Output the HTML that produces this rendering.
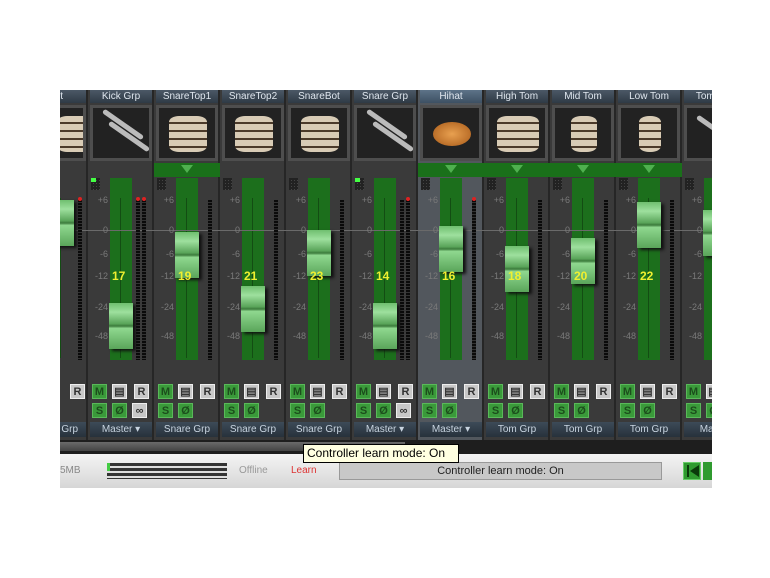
<!DOCTYPE html>
<html><head><meta charset="utf-8"><style>
*{margin:0;padding:0;box-sizing:border-box}
body{width:770px;height:578px;background:#fff;position:relative;overflow:hidden;font-family:"Liberation Sans",sans-serif}
#mix{position:absolute;left:60px;top:90px;width:652px;height:350px;background:#2e2e2e;overflow:hidden}
.s{position:absolute;top:0;width:66px;height:350px;background:#3a3a3a;border-right:2px solid #262626}
.s.sel{background:#52575d}
.nm{position:absolute;left:2px;top:0;width:62px;height:13px;background:linear-gradient(#4b5866,#2f3a45);color:#dfe6ee;font-size:10px;line-height:13px;text-align:center;white-space:nowrap;overflow:hidden}
.im{position:absolute;left:2px;top:15px;width:62px;height:56px;background:#222;border:3px solid #4e4e4e;overflow:hidden}
.gb{position:absolute;left:0;top:73px;width:66px;height:14px;background:#1a701a}
.gb:after{content:"";position:absolute;left:27px;top:2px;border-left:6px solid transparent;border-right:6px solid transparent;border-top:8px solid #4fb04f}
.gr{position:absolute;left:3px;top:88px;width:9px;height:12px;background:repeating-linear-gradient(90deg,#222 0 2px,transparent 2px 3px),repeating-linear-gradient(#222 0 2px,#444 2px 3px)}
.led{position:absolute;left:3px;top:88px;width:5px;height:4px;background:#4f4}
.tr{position:absolute;left:22px;top:88px;width:22px;height:182px;background:#1c6f1c}
.tr:after{content:"";position:absolute;left:10px;top:20px;width:1px;height:160px;background:#134d13}
.zl{position:absolute;left:0;top:140px;width:66px;height:1px;background:#6a6a6a}
.sc{position:absolute;left:0;width:20px;text-align:right;color:#7a7a7a;font-size:9px}
.mt{position:absolute;top:110px;width:4px;height:160px;background:repeating-linear-gradient(#0a0a0a 0 2px,#333 2px 3px)}
.rd{position:absolute;top:107px;width:4px;height:4px;background:#d22;border-radius:2px}
.fd{position:absolute;left:21px;width:24px;height:46px;background:linear-gradient(#6fbf6f,#9ee09e 20%,#5aa55a 45%,#3c7a3c 50%,#8fd88f 55%,#5aa55a 100%);box-shadow:3px 2px 3px #111}
.n{position:absolute;left:24px;top:179px;color:#f0f030;font-size:12px;font-weight:bold;z-index:5}
.b{position:absolute;width:15px;height:15px;font-size:11px;font-weight:bold;text-align:center;line-height:15px}
.g{background:#3a9a3a;color:#1c4d1c;border:1px solid #5ab85a}
.w{background:#c8c8c8;color:#333;border:1px solid #eee}
.o{position:absolute;left:2px;top:332px;width:62px;height:15px;background:linear-gradient(#3d4b58,#27313b);color:#c8d4e0;font-size:10px;line-height:15px;text-align:center;white-space:nowrap}
.drum{position:absolute;left:10px;top:8px;width:38px;height:36px;border-radius:10px/6px;background:repeating-linear-gradient(#d8cbb5 0 6px,#4b3a2a 6px 8px)}
.cab{position:absolute;width:48px;height:5px;background:#bbb;transform:rotate(35deg);border-radius:3px}
</style></head><body>
<div id="mix">
<div class="s" style="left:-38px"><div class="nm">Out</div><div class="im"><div class="drum" style="left:30px"></div></div><div class="tr" style="left:28px;width:10px"></div><div class="zl"></div><div class="mt" style="left:56px"></div><div class="rd" style="left:56px"></div><div class="fd" style="left:28px;top:110px"></div>
<div class="b w" style="left:48px;top:294px">R</div><div class="o">Snare Grp</div></div>

<div class="s" style="left:28px"><div class="nm">Kick Grp</div><div class="im"><div class="cab" style="left:6px;top:14px"></div><div class="cab" style="left:12px;top:26px"></div></div><div class="gr"></div><div class="led"></div><div class="tr"></div><div class="zl"></div>
<div class="sc" style="top:105px">+6</div><div class="sc" style="top:135px">0</div><div class="sc" style="top:159px">-6</div><div class="sc" style="top:181px">-12</div><div class="sc" style="top:212px">-24</div><div class="sc" style="top:241px">-48</div>
<div class="mt" style="left:48px"></div><div class="mt" style="left:54px"></div><div class="rd" style="left:48px"></div><div class="rd" style="left:54px"></div><div class="n">17</div><div class="fd" style="top:213px"></div>
<div class="b g" style="left:4px;top:294px">M</div><div class="b w" style="left:24px;top:294px">▤</div><div class="b w" style="left:46px;top:294px">R</div><div class="b g" style="left:4px;top:313px">S</div><div class="b g" style="left:24px;top:313px">Ø</div><div class="b w" style="left:44px;top:313px">∞</div><div class="o">Master ▾</div></div>

<div class="s" style="left:94px"><div class="nm">SnareTop1</div><div class="im"><div class="drum"></div></div><div class="gb"></div><div class="gr"></div><div class="tr"></div><div class="zl"></div>
<div class="sc" style="top:105px">+6</div><div class="sc" style="top:135px">0</div><div class="sc" style="top:159px">-6</div><div class="sc" style="top:181px">-12</div><div class="sc" style="top:212px">-24</div><div class="sc" style="top:241px">-48</div>
<div class="mt" style="left:54px"></div><div class="n">19</div><div class="fd" style="top:142px"></div>
<div class="b g" style="left:4px;top:294px">M</div><div class="b w" style="left:24px;top:294px">▤</div><div class="b w" style="left:46px;top:294px">R</div><div class="b g" style="left:4px;top:313px">S</div><div class="b g" style="left:24px;top:313px">Ø</div><div class="o">Snare Grp</div></div>

<div class="s" style="left:160px"><div class="nm">SnareTop2</div><div class="im"><div class="drum"></div></div><div class="gr"></div><div class="tr"></div><div class="zl"></div>
<div class="sc" style="top:105px">+6</div><div class="sc" style="top:135px">0</div><div class="sc" style="top:159px">-6</div><div class="sc" style="top:181px">-12</div><div class="sc" style="top:212px">-24</div><div class="sc" style="top:241px">-48</div>
<div class="mt" style="left:54px"></div><div class="n">21</div><div class="fd" style="top:196px"></div>
<div class="b g" style="left:4px;top:294px">M</div><div class="b w" style="left:24px;top:294px">▤</div><div class="b w" style="left:46px;top:294px">R</div><div class="b g" style="left:4px;top:313px">S</div><div class="b g" style="left:24px;top:313px">Ø</div><div class="o">Snare Grp</div></div>

<div class="s" style="left:226px"><div class="nm">SnareBot</div><div class="im"><div class="drum"></div></div><div class="gr"></div><div class="tr"></div><div class="zl"></div>
<div class="sc" style="top:105px">+6</div><div class="sc" style="top:135px">0</div><div class="sc" style="top:159px">-6</div><div class="sc" style="top:181px">-12</div><div class="sc" style="top:212px">-24</div><div class="sc" style="top:241px">-48</div>
<div class="mt" style="left:54px"></div><div class="n">23</div><div class="fd" style="top:140px"></div>
<div class="b g" style="left:4px;top:294px">M</div><div class="b w" style="left:24px;top:294px">▤</div><div class="b w" style="left:46px;top:294px">R</div><div class="b g" style="left:4px;top:313px">S</div><div class="b g" style="left:24px;top:313px">Ø</div><div class="o">Snare Grp</div></div>

<div class="s" style="left:292px"><div class="nm">Snare Grp</div><div class="im"><div class="cab" style="left:6px;top:14px"></div><div class="cab" style="left:12px;top:26px"></div></div><div class="gr"></div><div class="led"></div><div class="tr"></div><div class="zl"></div>
<div class="sc" style="top:105px">+6</div><div class="sc" style="top:135px">0</div><div class="sc" style="top:159px">-6</div><div class="sc" style="top:181px">-12</div><div class="sc" style="top:212px">-24</div><div class="sc" style="top:241px">-48</div>
<div class="mt" style="left:48px"></div><div class="mt" style="left:54px"></div><div class="rd" style="left:54px"></div><div class="n">14</div><div class="fd" style="top:213px"></div>
<div class="b g" style="left:4px;top:294px">M</div><div class="b w" style="left:24px;top:294px">▤</div><div class="b w" style="left:46px;top:294px">R</div><div class="b g" style="left:4px;top:313px">S</div><div class="b g" style="left:24px;top:313px">Ø</div><div class="b w" style="left:44px;top:313px">∞</div><div class="o">Master ▾</div></div>

<div class="s sel" style="left:358px"><div class="nm" style="background:linear-gradient(#5d7388,#3d5063)">Hihat</div><div class="im"><div style="position:absolute;left:10px;top:14px;width:38px;height:24px;border-radius:50%;background:radial-gradient(#e8a050,#a85a18)"></div></div><div class="gb"></div><div class="gr"></div><div class="tr"></div><div class="zl"></div>
<div class="sc" style="top:105px">+6</div><div class="sc" style="top:135px">0</div><div class="sc" style="top:159px">-6</div><div class="sc" style="top:181px">-12</div><div class="sc" style="top:212px">-24</div><div class="sc" style="top:241px">-48</div>
<div class="mt" style="left:54px"></div><div class="rd" style="left:54px"></div><div class="n">16</div><div class="fd" style="top:136px"></div>
<div class="b g" style="left:4px;top:294px">M</div><div class="b w" style="left:24px;top:294px">▤</div><div class="b w" style="left:46px;top:294px">R</div><div class="b g" style="left:4px;top:313px">S</div><div class="b g" style="left:24px;top:313px">Ø</div><div class="o">Master ▾</div></div>

<div class="s" style="left:424px"><div class="nm">High Tom</div><div class="im"><div class="drum" style="left:8px;width:42px"></div></div><div class="gb"></div><div class="gr"></div><div class="tr"></div><div class="zl"></div>
<div class="sc" style="top:105px">+6</div><div class="sc" style="top:135px">0</div><div class="sc" style="top:159px">-6</div><div class="sc" style="top:181px">-12</div><div class="sc" style="top:212px">-24</div><div class="sc" style="top:241px">-48</div>
<div class="mt" style="left:54px"></div><div class="fd" style="top:156px"></div><div class="n">18</div>
<div class="b g" style="left:4px;top:294px">M</div><div class="b w" style="left:24px;top:294px">▤</div><div class="b w" style="left:46px;top:294px">R</div><div class="b g" style="left:4px;top:313px">S</div><div class="b g" style="left:24px;top:313px">Ø</div><div class="o">Tom Grp</div></div>

<div class="s" style="left:490px"><div class="nm">Mid Tom</div><div class="im"><div class="drum" style="left:16px;width:26px"></div></div><div class="gb"></div><div class="gr"></div><div class="tr"></div><div class="zl"></div>
<div class="sc" style="top:105px">+6</div><div class="sc" style="top:135px">0</div><div class="sc" style="top:159px">-6</div><div class="sc" style="top:181px">-12</div><div class="sc" style="top:212px">-24</div><div class="sc" style="top:241px">-48</div>
<div class="mt" style="left:54px"></div><div class="fd" style="top:148px"></div><div class="n">20</div>
<div class="b g" style="left:4px;top:294px">M</div><div class="b w" style="left:24px;top:294px">▤</div><div class="b w" style="left:46px;top:294px">R</div><div class="b g" style="left:4px;top:313px">S</div><div class="b g" style="left:24px;top:313px">Ø</div><div class="o">Tom Grp</div></div>

<div class="s" style="left:556px"><div class="nm">Low Tom</div><div class="im"><div class="drum" style="left:18px;width:22px"></div></div><div class="gb"></div><div class="gr"></div><div class="tr"></div><div class="zl"></div>
<div class="sc" style="top:105px">+6</div><div class="sc" style="top:135px">0</div><div class="sc" style="top:159px">-6</div><div class="sc" style="top:181px">-12</div><div class="sc" style="top:212px">-24</div><div class="sc" style="top:241px">-48</div>
<div class="mt" style="left:54px"></div><div class="fd" style="top:112px"></div><div class="n">22</div>
<div class="b g" style="left:4px;top:294px">M</div><div class="b w" style="left:24px;top:294px">▤</div><div class="b w" style="left:46px;top:294px">R</div><div class="b g" style="left:4px;top:313px">S</div><div class="b g" style="left:24px;top:313px">Ø</div><div class="o">Tom Grp</div></div>

<div class="s" style="left:622px"><div class="nm">Tom Grp</div><div class="im"><div class="cab" style="left:6px;top:20px"></div></div><div class="gr"></div><div class="tr"></div><div class="zl"></div>
<div class="sc" style="top:105px">+6</div><div class="sc" style="top:135px">0</div><div class="sc" style="top:159px">-6</div><div class="sc" style="top:181px">-12</div><div class="sc" style="top:212px">-24</div><div class="sc" style="top:241px">-48</div>
<div class="fd" style="top:120px"></div>
<div class="b g" style="left:4px;top:294px">M</div><div class="b w" style="left:24px;top:294px">▤</div><div class="b g" style="left:4px;top:313px">S</div><div class="b g" style="left:24px;top:313px">Ø</div><div class="o">Master</div></div>
</div>
<div style="position:absolute;left:60px;top:440px;width:652px;height:14px;background:#1e1e1e"></div>
<div style="position:absolute;left:60px;top:442px;width:345px;height:9px;background:linear-gradient(#6a6a6a,#444)"></div>
<div style="position:absolute;left:60px;top:454px;width:652px;height:34px;background:linear-gradient(#f4f4f4,#d6d6d6)"></div>
<div style="position:absolute;left:60px;top:465px;font-size:10px;color:#888">5MB</div>
<div style="position:absolute;left:107px;top:463px;width:120px;height:16px;background:repeating-linear-gradient(#333 0 3px,#ddd 3px 5px)"></div>
<div style="position:absolute;left:107px;top:463px;width:3px;height:8px;background:#4c4"></div>
<div style="position:absolute;left:239px;top:465px;font-size:10px;color:#999">Offline</div>
<div style="position:absolute;left:291px;top:465px;font-size:10px;color:#d33">Learn</div>
<div style="position:absolute;left:339px;top:462px;width:323px;height:18px;background:#c8c8c8;border:1px solid #999;font-size:11px;line-height:16px;text-align:center;color:#222">Controller learn mode: On</div>
<div style="position:absolute;left:683px;top:462px;width:18px;height:18px;background:#2f9a2f;border:1px solid #6c6"></div>
<div style="position:absolute;left:687px;top:465px;width:2px;height:12px;background:#0a3a0a"></div>
<div style="position:absolute;left:690px;top:465px;border-top:6px solid transparent;border-bottom:6px solid transparent;border-right:9px solid #0a3a0a"></div>
<div style="position:absolute;left:703px;top:462px;width:9px;height:18px;background:#2f9a2f"></div>
<div style="position:absolute;left:303px;top:444px;width:156px;height:19px;background:#ffffe1;border:1px solid #000;font-size:12px;line-height:17px;padding-left:3px;color:#000;white-space:nowrap">Controller learn mode: On</div>
</body></html>
